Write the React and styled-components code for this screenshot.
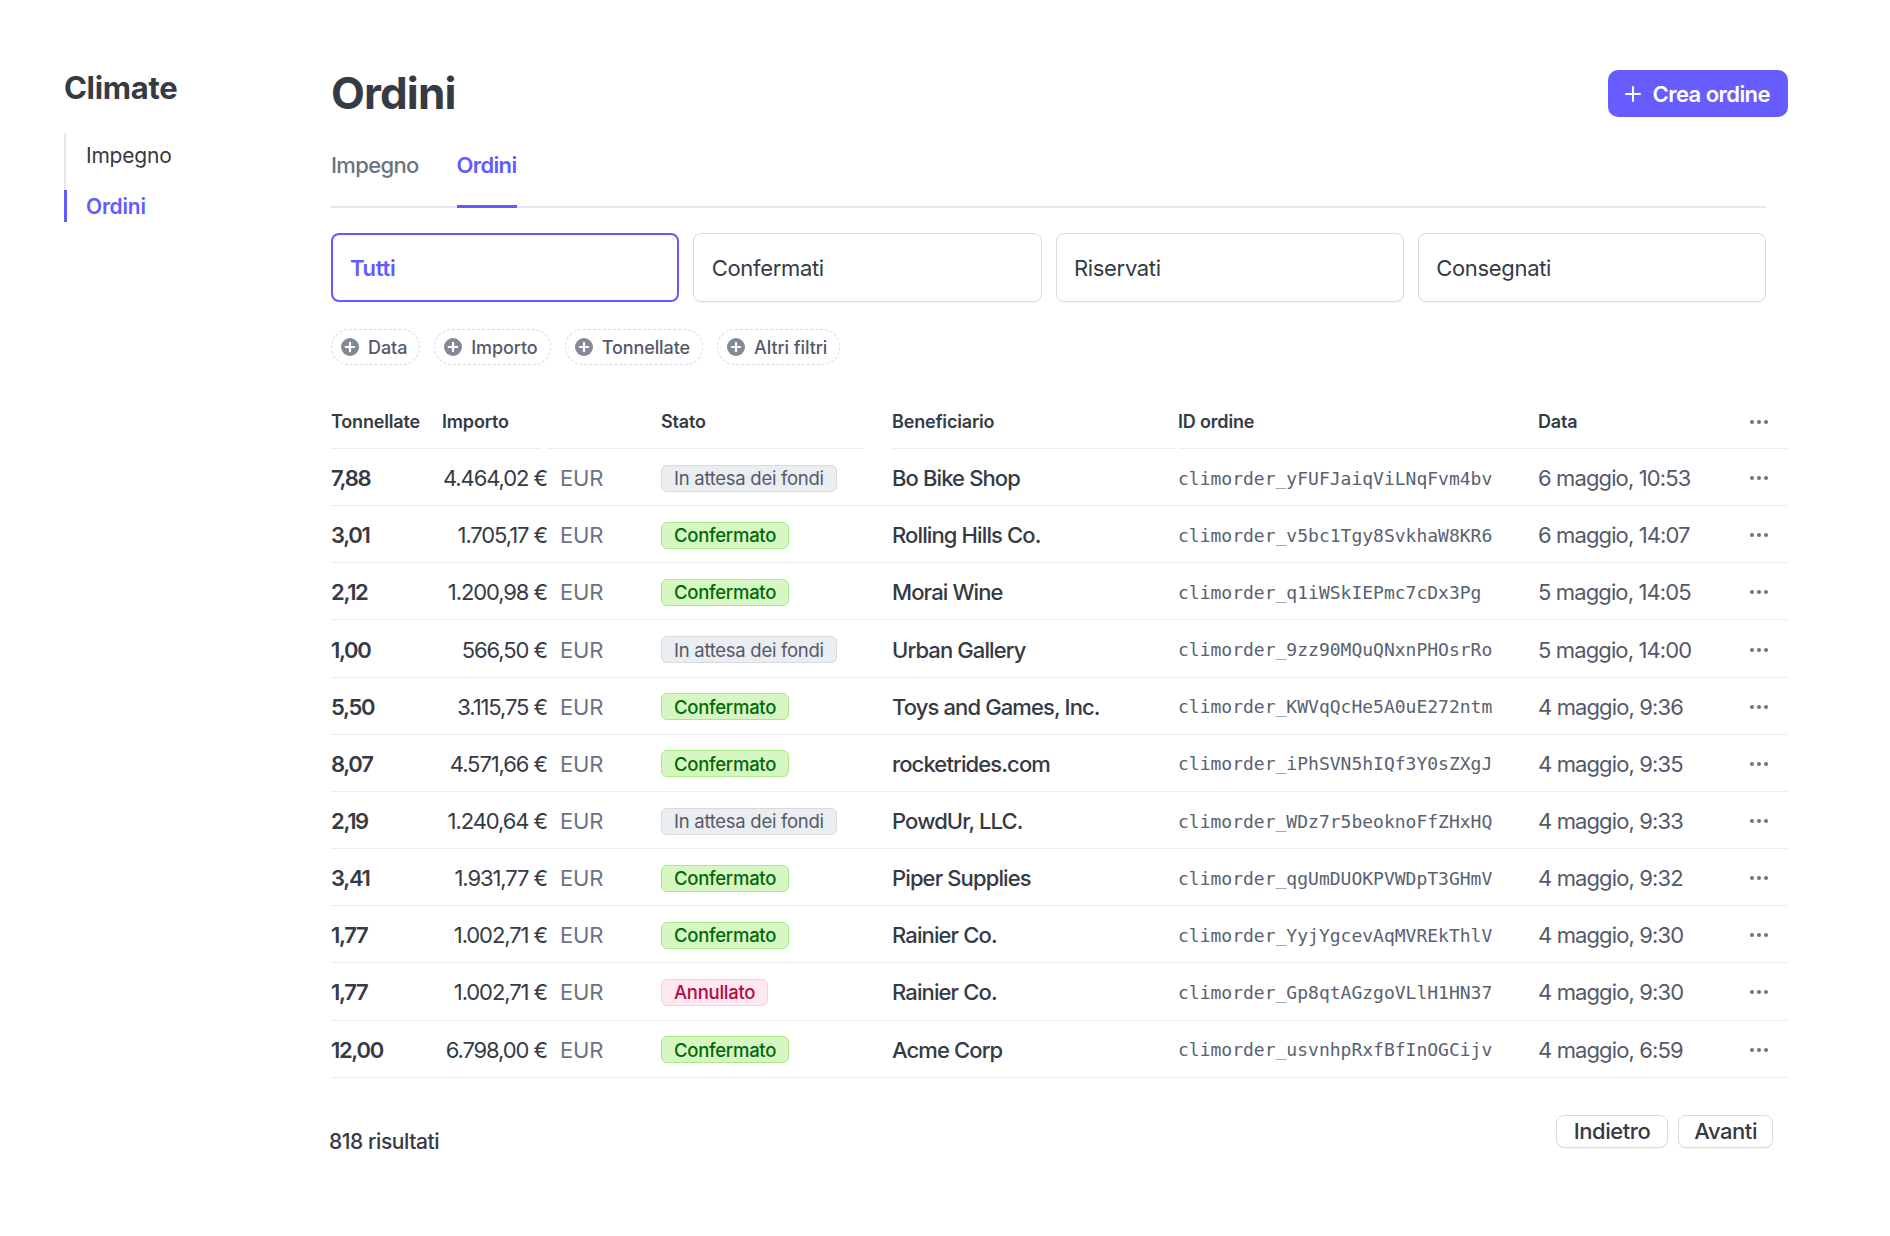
import React from 'react'
import styled, { createGlobalStyle } from 'styled-components'

const colours = {
  text: '#353a44',
  muted: '#6a7383',
  soft: '#545969',
  purple: '#635bff',
  border: '#ebeef1',
  borderStrong: '#d5dbe1',
}

const GlobalStyle = createGlobalStyle`
  body {
    margin: 0;
    background: #fff;
    font-family: Inter, 'Noto Sans', sans-serif;
    color: ${colours.text};
    -webkit-font-smoothing: antialiased;
  }
  * { box-sizing: border-box; }
`

const Page = styled.div`
  display: grid;
  grid-template-columns: 267px 1457px;
  padding: 70px 0 60px 64px;
`

const Sidebar = styled.aside`
  display: flex;
  flex-direction: column;
`

const Brand = styled.h1`
  margin: 0;
  font-size: 31px;
  line-height: 36px;
  font-weight: 700;
  letter-spacing: -0.01em;
  color: ${colours.text};
`

const SideNav = styled.nav`
  display: flex;
  flex-direction: column;
  gap: 19px;
  margin-top: 27px;
  padding-top: 6px;
  border-left: 2px solid #e3e8ee;
  width: fit-content;
  min-width: 120px;
`

const SideLink = styled.a`
  display: flex;
  align-items: center;
  height: 32px;
  margin-left: -2px;
  padding-left: 19px;
  border-left: 3px solid ${p => (p.$active ? colours.purple : 'transparent')};
  font-size: 21px;
  font-weight: ${p => (p.$active ? 600 : 400)};
  letter-spacing: -0.01em;
  color: ${p => (p.$active ? colours.purple : colours.text)};
`

const Main = styled.main`
  display: flex;
  flex-direction: column;
`

const Header = styled.div`
  display: flex;
  align-items: center;
  justify-content: space-between;
  height: 47px;
`

const Title = styled.h2`
  margin: 0;
  font-size: 44px;
  line-height: 47px;
  font-weight: 700;
  letter-spacing: -0.02em;
  color: ${colours.text};
`

const PrimaryButton = styled.button`
  display: flex;
  align-items: center;
  gap: 10px;
  height: 47px;
  padding: 0 18px 0 15px;
  border: none;
  border-radius: 10px;
  background: #675dff;
  color: #fff;
  font-family: inherit;
  font-size: 22px;
  font-weight: 600;
  letter-spacing: -0.025em;
`

const Tabs = styled.div`
  display: flex;
  gap: 38px;
  width: 1435px;
  margin-top: 23px;
  box-shadow: inset 0 -2px 0 #e3e8ee;
`

const Tab = styled.div`
  padding: 11px 0 26px;
  line-height: 28px;
  font-size: 22px;
  font-weight: ${p => (p.$active ? 600 : 500)};
  letter-spacing: -0.03em;
  color: ${p => (p.$active ? colours.purple : colours.muted)};
  border-bottom: 3px solid ${p => (p.$active ? colours.purple : 'transparent')};
`

const Segments = styled.div`
  display: grid;
  grid-template-columns: repeat(4, 1fr);
  gap: 14px;
  width: 1435px;
  margin-top: 25px;
`

const Segment = styled.div`
  display: flex;
  align-items: center;
  height: 69px;
  padding-left: ${p => (p.$active ? 17 : 17.5)}px;
  border: ${p => (p.$active ? `2px solid ${colours.purple}` : `1.5px solid ${colours.borderStrong}`)};
  border-radius: 8px;
  font-size: 22px;
  font-weight: ${p => (p.$active ? 600 : 400)};
  letter-spacing: -0.015em;
  color: ${p => (p.$active ? colours.purple : colours.text)};
  box-shadow: ${p => (p.$active ? 'none' : '0 1px 1px rgba(0,0,0,0.03)')};
`

const Filters = styled.div`
  display: flex;
  gap: 14px;
  margin-top: 27px;
`

const Chip = styled.div`
  display: flex;
  align-items: center;
  gap: 9px;
  height: 36px;
  padding: 0 12px 0 9px;
  border: 1.5px dashed ${colours.borderStrong};
  border-radius: 18px;
  font-size: 18px;
  font-weight: 500;
  letter-spacing: -0.005em;
  color: ${colours.soft};
`

const Table = styled.div`
  margin-top: 32px;
  display: flex;
  flex-direction: column;
`

const Row = styled.div`
  display: grid;
  grid-template-columns: 111px 105px 114px 231px 286px 360px 1fr 58px;
  align-items: center;
  height: ${p => (p.$head ? '52px' : '57.17px')};
  padding-top: ${p => (p.$head ? 0 : 2)}px;
  border-bottom: ${p => (p.$head ? 'none' : `1.5px solid ${colours.border}`)};
`

const HeadCell = styled.div`
  display: flex;
  align-items: center;
  justify-content: ${p => (p.$center ? 'center' : 'flex-start')};
  height: 100%;
  padding-bottom: 2px;
  margin-right: ${p => p.$trim || 0}px;
  border-bottom: 1.5px solid ${colours.border};
  font-size: 18px;
  font-weight: 600;
  letter-spacing: -0.01em;
  color: ${colours.text};
`

const Tons = styled.div`
  font-size: 22px;
  font-weight: 600;
  letter-spacing: -0.06em;
  color: ${colours.text};
`

const Amount = styled.div`
  text-align: right;
  font-size: 22px;
  font-weight: 400;
  letter-spacing: -0.05em;
  color: ${colours.text};
`

const Currency = styled.div`
  padding-left: 13px;
  font-size: 22px;
  letter-spacing: -0.01em;
  color: ${colours.muted};
`

const badgeTones = {
  pending: { bg: '#ebeef1', border: '#d5dbe1', color: '#545969' },
  ok: { bg: '#d7f7c2', border: '#a6eb84', color: '#006908' },
  void: { bg: '#ffe7f2', border: '#ffccdf', color: '#b3093c' },
}

const Badge = styled.span`
  justify-self: start;
  display: inline-flex;
  align-items: center;
  height: 27px;
  padding: 0 12px;
  border-radius: 6px;
  border: 1.5px solid ${p => badgeTones[p.$tone].border};
  background: ${p => badgeTones[p.$tone].bg};
  color: ${p => badgeTones[p.$tone].color};
  font-size: 18.5px;
  font-weight: ${p => (p.$tone === 'pending' ? 400 : 500)};
  letter-spacing: -0.015em;
`

const Customer = styled.div`
  font-size: 22px;
  font-weight: 500;
  letter-spacing: -0.04em;
  color: ${colours.text};
  white-space: nowrap;
`

const OrderId = styled.div`
  font-family: 'DejaVu Sans Mono', 'Liberation Mono', monospace;
  font-size: 18px;
  color: #596171;
`

const DateCell = styled.div`
  font-size: 22px;
  letter-spacing: -0.04em;
  color: ${colours.soft};
`

const Actions = styled.div`
  display: flex;
  justify-content: center;
  color: ${colours.muted};
`

const Footer = styled.div`
  display: flex;
  align-items: flex-start;
  justify-content: space-between;
  width: 1442px;
  margin-top: 37px;
`

const Count = styled.div`
  margin: 14px 0 0 -2px;
  font-size: 21px;
  font-weight: 500;
  letter-spacing: -0.02em;
  color: ${colours.text};
`

const Pager = styled.div`
  display: flex;
  gap: 10px;
`

const PagerButton = styled.button`
  height: 33px;
  padding: 0 ${p => p.$pad || 17}px;
  border: 1.5px solid ${colours.borderStrong};
  border-radius: 8px;
  background: #fff;
  box-shadow: 0 1px 1px rgba(0, 0, 0, 0.04);
  font-family: inherit;
  font-size: 22px;
  font-weight: 500;
  letter-spacing: -0.02em;
  color: ${colours.text};
`

const PlusIcon = () => (
  <svg width="20" height="20" viewBox="0 0 20 20" fill="none">
    <path d="M10 3v14M3 10h14" stroke="#fff" strokeWidth="2" strokeLinecap="round" />
  </svg>
)

const PlusCircle = () => (
  <svg width="18" height="18" viewBox="0 0 18 18">
    <circle cx="9" cy="9" r="9" fill="#818999" />
    <path d="M9 4.8v8.4M4.8 9h8.4" stroke="#fff" strokeWidth="2.2" strokeLinecap="round" />
  </svg>
)

const Dots = () => (
  <svg width="20" height="6" viewBox="0 0 20 6">
    <circle cx="3" cy="3" r="2" fill="currentColor" />
    <circle cx="10" cy="3" r="2" fill="currentColor" />
    <circle cx="17" cy="3" r="2" fill="currentColor" />
  </svg>
)

const orders = [
  ['7,88', '4.464,02 €', 'pending', 'Bo Bike Shop', 'climorder_yFUFJaiqViLNqFvm4bv', '6 maggio, 10:53'],
  ['3,01', '1.705,17 €', 'ok', 'Rolling Hills Co.', 'climorder_v5bc1Tgy8SvkhaW8KR6', '6 maggio, 14:07'],
  ['2,12', '1.200,98 €', 'ok', 'Morai Wine', 'climorder_q1iWSkIEPmc7cDx3Pg', '5 maggio, 14:05'],
  ['1,00', '566,50 €', 'pending', 'Urban Gallery', 'climorder_9zz90MQuQNxnPHOsrRo', '5 maggio, 14:00'],
  ['5,50', '3.115,75 €', 'ok', 'Toys and Games, Inc.', 'climorder_KWVqQcHe5A0uE272ntm', '4 maggio, 9:36'],
  ['8,07', '4.571,66 €', 'ok', 'rocketrides.com', 'climorder_iPhSVN5hIQf3Y0sZXgJ', '4 maggio, 9:35'],
  ['2,19', '1.240,64 €', 'pending', 'PowdUr, LLC.', 'climorder_WDz7r5beoknoFfZHxHQ', '4 maggio, 9:33'],
  ['3,41', '1.931,77 €', 'ok', 'Piper Supplies', 'climorder_qgUmDUOKPVWDpT3GHmV', '4 maggio, 9:32'],
  ['1,77', '1.002,71 €', 'ok', 'Rainier Co.', 'climorder_YyjYgcevAqMVREkThlV', '4 maggio, 9:30'],
  ['1,77', '1.002,71 €', 'void', 'Rainier Co.', 'climorder_Gp8qtAGzgoVLlH1HN37', '4 maggio, 9:30'],
  ['12,00', '6.798,00 €', 'ok', 'Acme Corp', 'climorder_usvnhpRxfBfInOGCijv', '4 maggio, 6:59'],
]

const statusLabel = {
  pending: 'In attesa dei fondi',
  ok: 'Confermato',
  void: 'Annullato',
}

const App = () => {
  return (
    <>
      <GlobalStyle />
      <Page>
        <Sidebar>
          <Brand>Climate</Brand>
          <SideNav>
            <SideLink>Impegno</SideLink>
            <SideLink $active>Ordini</SideLink>
          </SideNav>
        </Sidebar>

        <Main>
          <Header>
            <Title>Ordini</Title>
            <PrimaryButton>
              <PlusIcon />
              Crea ordine
            </PrimaryButton>
          </Header>

          <Tabs>
            <Tab>Impegno</Tab>
            <Tab $active>Ordini</Tab>
          </Tabs>

          <Segments>
            <Segment $active>Tutti</Segment>
            <Segment>Confermati</Segment>
            <Segment>Riservati</Segment>
            <Segment>Consegnati</Segment>
          </Segments>

          <Filters>
            {['Data', 'Importo', 'Tonnellate', 'Altri filtri'].map(label => (
              <Chip key={label}>
                <PlusCircle />
                {label}
              </Chip>
            ))}
          </Filters>

          <Table>
            <Row $head>
              <HeadCell>Tonnellate</HeadCell>
              <HeadCell $trim={6}>Importo</HeadCell>
              <HeadCell />
              <HeadCell $trim={28}>Stato</HeadCell>
              <HeadCell $trim={2}>Beneficiario</HeadCell>
              <HeadCell>ID ordine</HeadCell>
              <HeadCell>Data</HeadCell>
              <HeadCell $center>
                <Actions><Dots /></Actions>
              </HeadCell>
            </Row>
            {orders.map((o, i) => (
              <Row key={i}>
                <Tons>{o[0]}</Tons>
                <Amount>{o[1]}</Amount>
                <Currency>EUR</Currency>
                <Badge $tone={o[2]}>{statusLabel[o[2]]}</Badge>
                <Customer>{o[3]}</Customer>
                <OrderId>{o[4]}</OrderId>
                <DateCell>{o[5]}</DateCell>
                <Actions><Dots /></Actions>
              </Row>
            ))}
          </Table>

          <Footer>
            <Count>818 risultati</Count>
            <Pager>
              <PagerButton>Indietro</PagerButton>
              <PagerButton $pad={15}>Avanti</PagerButton>
            </Pager>
          </Footer>
        </Main>
      </Page>
    </>
  )
}

export default App
